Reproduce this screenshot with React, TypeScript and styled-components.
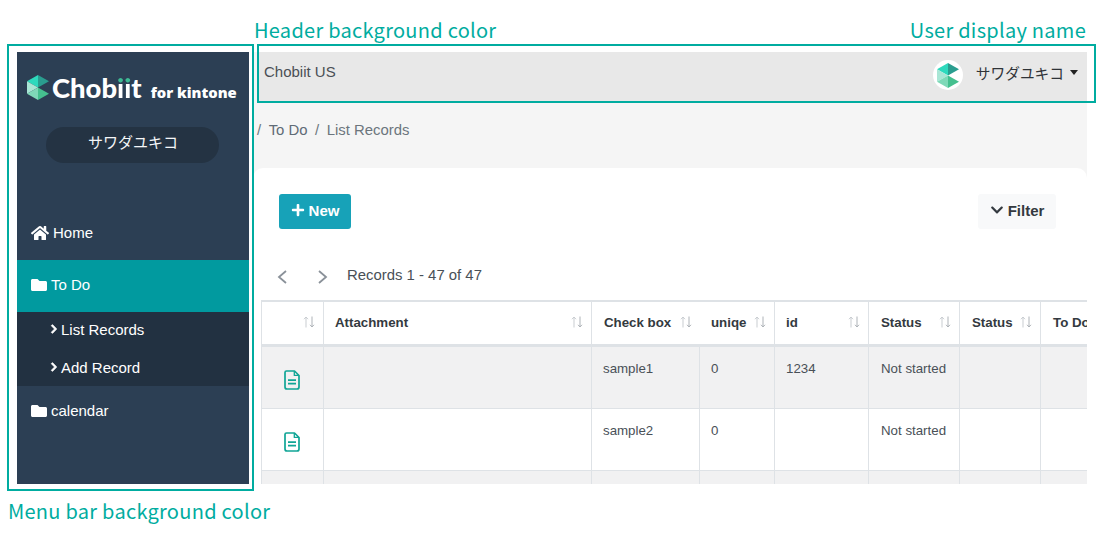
import React from "react";
import styled, { createGlobalStyle } from "styled-components";
import { FaHome, FaFolder, FaChevronRight, FaChevronDown, FaPlus } from "react-icons/fa";

const Global = createGlobalStyle`
  html, body { margin: 0; padding: 0; background: #fff; }
  * { box-sizing: border-box; }
  body { font-family: "Liberation Sans", Arial, sans-serif; }
`;

const Stage = styled.div`
  position: relative;
  width: 1105px;
  height: 533px;
  overflow: hidden;
  background: #fff;
  padding: 52px 18px 49px 17px;
  display: flex;
  gap: 4px;
`;

const Outline = styled.div<{ $x: number; $y: number; $w: number; $h: number }>`
  position: absolute;
  left: ${(p) => p.$x}px;
  top: ${(p) => p.$y}px;
  width: ${(p) => p.$w}px;
  height: ${(p) => p.$h}px;
  border: 2px solid #00aca0;
  pointer-events: none;
`;

const Caption = styled.div<{ $x?: number; $right?: number; $y: number }>`
  position: absolute;
  ${(p) => (p.$x !== undefined ? `left: ${p.$x}px;` : "")}
  ${(p) => (p.$right !== undefined ? `right: ${p.$right}px;` : "")}
  top: ${(p) => p.$y}px;
  font-family: "Noto Sans CJK JP", "Noto Sans", sans-serif;
  font-size: 20px;
  line-height: 26px;
  letter-spacing: 0.27px;
  color: #00aca0;
  white-space: nowrap;
`;

const Sidebar = styled.aside`
  width: 232px;
  flex: none;
  background: #2c3f54;
  color: #fff;
  display: flex;
  flex-direction: column;
`;

const Brand = styled.div`
  height: 75px;
  padding: 23px 0 0 10px;
  display: flex;
  align-items: flex-start;
`;

const BrandWord = styled.span`
  font-family: Lato, "Open Sans", sans-serif;
  font-weight: 900;
  font-size: 27.4px;
  line-height: 30px;
  margin: -2px 0 0 3px;
`;

const BrandDots = styled.span`
  background: linear-gradient(#3dbb94 0 38%, #fff 38%);
  -webkit-background-clip: text;
  background-clip: text;
  color: transparent;
`;

const BrandSuffix = styled.span`
  font-family: "Open Sans", sans-serif;
  font-weight: 800;
  font-size: 14.8px;
  line-height: 20px;
  margin: 7px 0 0 9px;
  white-space: nowrap;
`;

const UserPill = styled.div`
  width: 173px;
  height: 36px;
  margin-left: 29px;
  padding: 0 0 8px 1px;
  border-radius: 18px;
  background: #243343;
  display: flex;
  align-items: center;
  justify-content: center;
  font-family: "Noto Sans CJK JP", sans-serif;
  font-weight: 400;
  font-size: 15px;
  color: #f4f6f8;
`;

const Nav = styled.nav`
  margin-top: 45px;
  display: flex;
  flex-direction: column;
`;

const NavItem = styled.div<{ $active?: boolean }>`
  height: 52px;
  padding: 0 0 3px 14px;
  display: flex;
  align-items: center;
  gap: 4px;
  font-size: 15px;
  background: ${(p) => (p.$active ? "#019a9f" : "transparent")};
  svg { flex: none; }
`;

const SubNav = styled.div`
  height: 74px;
  background: #223141;
  padding-left: 32px;
  display: flex;
  flex-direction: column;
`;

const SubItem = styled.div`
  height: 38px;
  flex: none;
  padding-bottom: 4px;
  display: flex;
  align-items: center;
  gap: 2px;
  font-size: 15px;
`;

const SubChevron = styled(FaChevronRight)`
  stroke: currentColor;
  stroke-width: 40px;
`;

const Main = styled.main`
  width: 834px;
  flex: none;
  background: #f5f5f5;
  display: flex;
  flex-direction: column;
  min-height: 0;
`;

const Header = styled.header`
  height: 50px;
  flex: none;
  margin-left: 6px;
  background: #e8e8e8;
  display: flex;
  align-items: center;
  justify-content: space-between;
  padding: 0 9px 12px 5px;
  font-size: 15px;
  color: #4a4f55;
`;

const HeaderUser = styled.div`
  display: flex;
  align-items: center;
  margin-top: 8px;
  font-family: "Noto Sans CJK JP", sans-serif;
  font-weight: 400;
  font-size: 14.7px;
  color: #2f3338;
`;

const HeaderName = styled.span`
  margin-bottom: 6px;
`;

const Avatar = styled.div`
  width: 30px;
  height: 30px;
  border-radius: 50%;
  background: #fff;
  display: flex;
  align-items: center;
  justify-content: center;
  margin-right: 13px;
`;

const Caret = styled.span`
  width: 0;
  height: 0;
  margin: 0 0 5px 6px;
  border-left: 4.5px solid transparent;
  border-right: 4.5px solid transparent;
  border-top: 5px solid #222;
`;

const Crumbs = styled.div`
  height: 66px;
  flex: none;
  padding: 18px 0 0 4px;
  display: flex;
  gap: 7.5px;
  font-size: 14.9px;
  line-height: 20px;
  color: #6c757d;
`;

const CrumbLink = styled.span`
  color: #5f6b76;
`;

const Card = styled.section`
  flex: 1;
  min-height: 0;
  background: #fff;
  border-radius: 10px 10px 0 0;
  overflow: hidden;
  padding: 26px 0 0 8px;
  display: flex;
  flex-direction: column;
`;

const Toolbar = styled.div`
  flex: none;
  display: flex;
  justify-content: space-between;
  padding: 0 31px 0 18px;
  height: 35px;
`;

const NewButton = styled.button`
  width: 72px;
  height: 35px;
  border: 0;
  border-radius: 3px;
  background: #17a2b8;
  color: #fff;
  font: bold 15px "Liberation Sans", sans-serif;
  display: flex;
  align-items: center;
  justify-content: center;
  gap: 4px;
  padding: 0 0 3px;
`;

const FilterButton = styled.button`
  width: 78px;
  height: 35px;
  border: 0;
  border-radius: 3px;
  background: #f8f9fa;
  color: #343a40;
  font: bold 15px "Liberation Sans", sans-serif;
  display: flex;
  align-items: center;
  justify-content: center;
  gap: 4px;
  padding: 0 0 3px;
`;

const Pager = styled.div`
  flex: none;
  height: 71px;
  padding: 25px 0 0 16px;
  display: flex;
  align-items: center;
  font-size: 14.9px;
  color: #495057;
`;

const PagerGap = styled.span`
  width: 31px;
  flex: none;
`;

const PagerLabel = styled.span`
  margin: 0 0 4px 19px;
`;

const Table = styled.table`
  flex: none;
  width: 826px;
  table-layout: fixed;
  border-collapse: separate;
  border-spacing: 0;
  border-left: 1px solid #dee2e6;
`;

const HeadCell = styled.th<{ $noRight?: boolean; $pad?: number }>`
  height: 47px;
  padding: 0 8px 2px ${(p) => p.$pad ?? 11}px;
  text-align: left;
  font-size: 13.3px;
  font-weight: bold;
  color: #343a40;
  white-space: nowrap;
  overflow: hidden;
  background: #fff;
  border-top: 2px solid #dee2e6;
  border-bottom: 3px solid #dee2e6;
  border-right: ${(p) => (p.$noRight ? "0" : "1px solid #dee2e6")};
`;

const HeadInner = styled.div`
  display: flex;
  align-items: center;
  justify-content: space-between;
`;

const Row = styled.tr<{ $shaded?: boolean }>`
  background: ${(p) => (p.$shaded ? "#f1f1f2" : "#fff")};
`;

const Cell = styled.td<{ $h?: number; $pad?: number }>`
  height: ${(p) => p.$h ?? 62}px;
  padding: 13px 8px 0 ${(p) => p.$pad ?? 11}px;
  vertical-align: top;
  font-size: 13.3px;
  line-height: 18px;
  color: #495057;
  white-space: nowrap;
  border-right: 1px solid #dee2e6;
  border-bottom: 1px solid #dee2e6;
`;

const IconCell = styled(Cell)`
  padding: 23px 0 0 22px;
`;

const SortIcon = () => (
  <svg width="12" height="12" viewBox="0 0 12 12" fill="none" strokeWidth="1">
    <path d="M3 11.5V1M1 3.2 3 1l2 2.2" stroke="#c9cdd1" />
    <path d="M9 .5V11M7 8.8 9 11l2-2.2" stroke="#aeb3b8" />
  </svg>
);

const DocIcon = () => (
  <svg width="16" height="20" viewBox="0 0 16 20" fill="none" stroke="#10a596" strokeWidth="1.7" strokeLinejoin="round">
    <path d="M2.5 1h8L15 5.5V17a2 2 0 0 1-2 2H3a2 2 0 0 1-2-2V2.5A1.5 1.5 0 0 1 2.5 1Z" />
    <path d="M10.3 1v4.4H15" strokeWidth="1.3" />
    <path d="M4 10.2h8M4 13.6h8" strokeWidth="1.8" />
  </svg>
);

const PagerChevron = ({ flip }: { flip?: boolean }) => (
  <svg width="10" height="14" viewBox="0 0 10 14" fill="none" stroke="#8a9199" strokeWidth="1.8">
    <path d={flip ? "M1 1l7 6-7 6" : "M9 1 2 7l7 6"} />
  </svg>
);

const LogoMark = ({ size }: { size: number }) => (
  <svg width={size} height={(size * 25) / 22} viewBox="0 0 22 25">
    <path d="M0 6.2 11 0v12.5Z" fill="#2ed9bd" />
    <path d="M11 0 22 6.2 11 12.5Z" fill="#2a9d8f" />
    <path d="M0 6.2 11 12.5 0 18.8Z" fill="#a9e6d5" />
    <path d="M0 18.8 11 12.5V25Z" fill="#7fd9b8" />
    <path d="M11 12.5 22 18.8 11 25Z" fill="#45c08f" />
  </svg>
);

const widths = [62, 268, 108, 75, 94, 91, 81, 47];

const rows = [
  { check: "sample1", uniq: "0", id: "1234", status: "Not started", shaded: true },
  { check: "sample2", uniq: "0", id: "", status: "Not started", shaded: false },
];

export default function App() {
  return (
    <Stage>
      <Global />
      <Sidebar>
        <Brand>
          <LogoMark size={22} />
          <BrandWord>
            Chob<BrandDots>ii</BrandDots>t
          </BrandWord>
          <BrandSuffix>for kintone</BrandSuffix>
        </Brand>
        <UserPill>サワダユキコ</UserPill>
        <Nav>
          <NavItem>
            <FaHome size={18} />
            Home
          </NavItem>
          <NavItem $active>
            <FaFolder size={16} />
            To Do
          </NavItem>
          <SubNav>
            <SubItem>
              <SubChevron size={10} />
              List Records
            </SubItem>
            <SubItem>
              <SubChevron size={10} />
              Add Record
            </SubItem>
          </SubNav>
          <NavItem>
            <FaFolder size={16} />
            calendar
          </NavItem>
        </Nav>
      </Sidebar>
      <Main>
        <Header>
          <span>Chobiit US</span>
          <HeaderUser>
            <Avatar>
              <LogoMark size={22} />
            </Avatar>
            <HeaderName>サワダユキコ</HeaderName>
            <Caret />
          </HeaderUser>
        </Header>
        <Crumbs>
          <span>/</span>
          <CrumbLink>To Do</CrumbLink>
          <span>/</span>
          <span>List Records</span>
        </Crumbs>
        <Card>
          <Toolbar>
            <NewButton>
              <FaPlus size={14} />
              New
            </NewButton>
            <FilterButton>
              <FaChevronDown size={14} />
              Filter
            </FilterButton>
          </Toolbar>
          <Pager>
            <PagerChevron />
            <PagerGap />
            <PagerChevron flip />
            <PagerLabel>Records 1 - 47 of 47</PagerLabel>
          </Pager>
          <Table>
            <colgroup>
              {widths.map((w, i) => (
                <col key={i} style={{ width: w }} />
              ))}
            </colgroup>
            <thead>
              <tr>
                <HeadCell><HeadInner><span /><SortIcon /></HeadInner></HeadCell>
                <HeadCell><HeadInner>Attachment<SortIcon /></HeadInner></HeadCell>
                <HeadCell $noRight $pad={12}><HeadInner>Check box<SortIcon /></HeadInner></HeadCell>
                <HeadCell $pad={11}><HeadInner>uniqe<SortIcon /></HeadInner></HeadCell>
                <HeadCell><HeadInner>id<SortIcon /></HeadInner></HeadCell>
                <HeadCell $pad={12}><HeadInner>Status<SortIcon /></HeadInner></HeadCell>
                <HeadCell $pad={12}><HeadInner>Status<SortIcon /></HeadInner></HeadCell>
                <HeadCell $pad={12} $noRight>To Do</HeadCell>
              </tr>
            </thead>
            <tbody>
              {rows.map((r) => (
                <Row key={r.check} $shaded={r.shaded}>
                  <IconCell><DocIcon /></IconCell>
                  <Cell />
                  <Cell>{r.check}</Cell>
                  <Cell>{r.uniq}</Cell>
                  <Cell>{r.id}</Cell>
                  <Cell $pad={12}>{r.status}</Cell>
                  <Cell />
                  <Cell />
                </Row>
              ))}
              <Row $shaded>
                {widths.map((_, i) => (
                  <Cell key={i} $h={20} />
                ))}
              </Row>
            </tbody>
          </Table>
        </Card>
      </Main>
      <Outline $x={7} $y={44} $w={247} $h={447} />
      <Outline $x={257} $y={44} $w={839} $h={59} />
      <Caption $x={254} $y={17}>Header background color</Caption>
      <Caption $right={19} $y={17}>User display name</Caption>
      <Caption $x={8} $y={498}>Menu bar background color</Caption>
    </Stage>
  );
}
